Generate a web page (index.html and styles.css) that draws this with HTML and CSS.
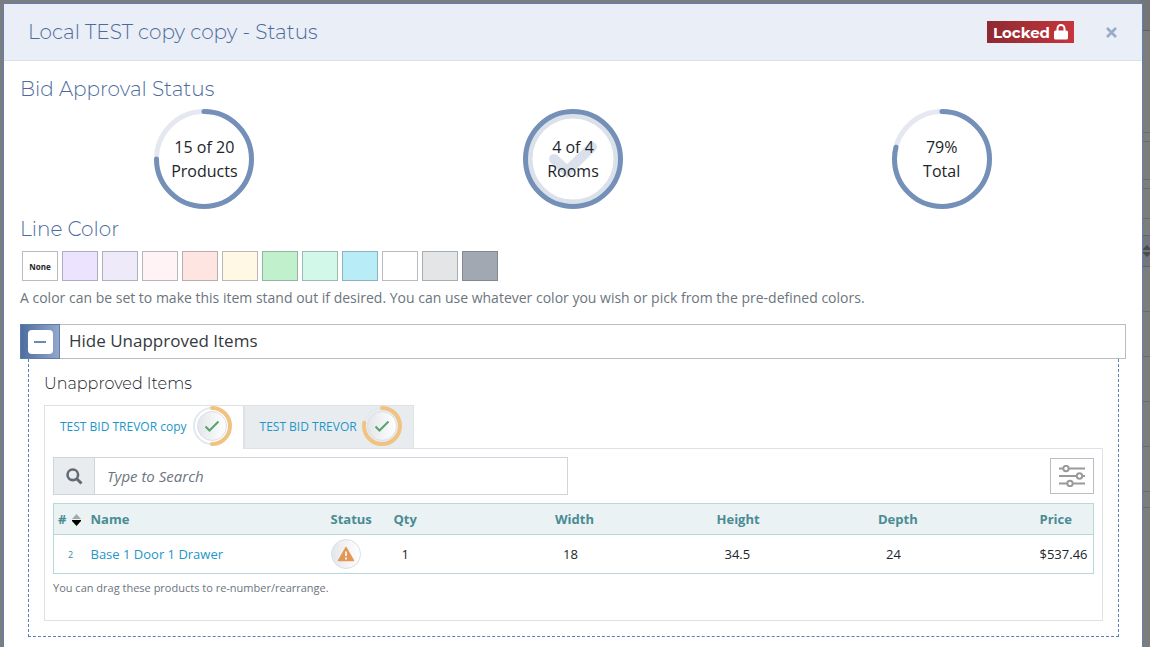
FILE: index.html
```
<!DOCTYPE html>
<html lang="en">
<head>
    <meta charset="UTF-8">
    <meta name="viewport" content="width=device-width, initial-scale=1.0">
    <title>Local TEST copy copy - Status</title>
    <link rel="stylesheet" href="styles.css">
</head>
<body>
    <!-- dimmed page behind the modal -->
    <div class="backdrop" aria-hidden="true">
        <div class="row head"></div>
        <div class="row gap"></div>
        <div class="row short"></div>
        <div class="row"></div>
        <div class="row short"></div>
        <div class="row mid"></div>
        <div class="row thin"></div>
        <div class="row sort">
            <svg width="10" height="12" viewBox="0 0 10 12"><path d="M5 0l5 5H0zM5 12L0 7h10z" fill="#4b4b4b"/></svg>
        </div>
        <div class="row tall"></div>
        <div class="row tall"></div>
        <div class="row tall"></div>
        <div class="row tall"></div>
        <div class="row tall"></div>
        <div class="row last"></div>
    </div>

    <div class="modal" role="dialog" aria-labelledby="modal-title">
        <header class="modal-header">
            <h1 id="modal-title">Local TEST copy copy - Status</h1>
            <span class="locked">Locked
                <svg width="14" height="16" viewBox="0 0 14 16"><path d="M3.500 7V4.500a3.500 3.500 0 0 1 7 0V7" fill="none" stroke="#fff" stroke-width="2"/><rect y="6.500" width="14" height="9" rx="1.500" fill="#fff"/></svg>
            </span>
            <button class="close" type="button" aria-label="Close">
                <svg width="11" height="11" viewBox="0 0 11 11"><path d="M1 1l9 9M10 1l-9 9" stroke="#98abc8" stroke-width="2.600"/></svg>
            </button>
        </header>

        <main class="modal-body">
            <h2>Bid Approval Status</h2>
            <div class="status-rings">
                <div class="ring">
                    <svg viewBox="0 0 100 100">
                        <circle class="track" cx="50" cy="50" r="47.500"/>
                        <circle class="bar" cx="50" cy="50" r="47.500" pathLength="100" stroke-dasharray="75 100"/>
                    </svg>
                    <p>15 of 20<br>Products</p>
                </div>
                <div class="ring">
                    <svg viewBox="0 0 100 100">
                        <circle cx="50" cy="50" r="43" fill="none" stroke="#dbe1eb" stroke-width="4"/>
                        <path d="M31 50l13 12 25-24" fill="none" stroke="#dbe1eb" stroke-width="10" stroke-linecap="round"/>
                        <circle class="bar" cx="50" cy="50" r="47.500"/>
                    </svg>
                    <p>4 of 4<br>Rooms</p>
                </div>
                <div class="ring">
                    <svg viewBox="0 0 100 100">
                        <circle class="track" cx="50" cy="50" r="47.500"/>
                        <circle class="bar" cx="50" cy="50" r="47.500" pathLength="100" stroke-dasharray="79 100"/>
                    </svg>
                    <p>79%<br>Total</p>
                </div>
            </div>

            <h2>Line Color</h2>
            <div class="swatches">
                <button type="button">None</button>
                <button type="button" class="violet" aria-label="Violet"></button>
                <button type="button" class="lavender" aria-label="Lavender"></button>
                <button type="button" class="blush" aria-label="Blush"></button>
                <button type="button" class="rose" aria-label="Rose"></button>
                <button type="button" class="cream" aria-label="Cream"></button>
                <button type="button" class="green" aria-label="Green"></button>
                <button type="button" class="mint" aria-label="Mint"></button>
                <button type="button" class="sky" aria-label="Sky"></button>
                <button type="button" class="white" aria-label="White"></button>
                <button type="button" class="silver" aria-label="Silver"></button>
                <button type="button" class="slate" aria-label="Slate"></button>
            </div>
            <p class="help">A color can be set to make this item stand out if desired. You can use whatever color you wish or pick from the pre-defined colors.</p>

            <button class="toggle" type="button" aria-expanded="true">
                <span class="toggle-icon"><span><svg width="12" height="2" viewBox="0 0 12 2"><path d="M0 1h12" stroke="#6c87b1" stroke-width="2"/></svg></span></span>
                <span class="toggle-label">Hide Unapproved Items</span>
            </button>

            <section class="unapproved">
                <h3>Unapproved Items</h3>
                <nav class="tabs">
                    <a href="#" class="active">TEST BID TREVOR copy
                        <svg width="40" height="40" viewBox="0 0 40 40">
                            <defs>
                                <linearGradient id="disc"><stop offset="0" stop-color="#e3e6ea"/><stop offset="1" stop-color="#fff"/></linearGradient>
                            </defs>
                            <circle cx="20" cy="20" r="18" fill="none" stroke="#e4e8f0" stroke-width="2"/>
                            <circle cx="20" cy="20" r="14.500" fill="url(#disc)" stroke="#dcdfe4"/>
                            <circle class="mini-bar" cx="20" cy="20" r="18" pathLength="100" stroke-dasharray="50 100"/>
                            <path d="M13.500 20.500l4 4 9-9" fill="none" stroke="#57a46c" stroke-width="2"/>
                        </svg>
                    </a>
                    <a href="#">TEST BID TREVOR
                        <svg width="40" height="40" viewBox="0 0 40 40">
                            <circle cx="20" cy="20" r="18" fill="none" stroke="#e4e8f0" stroke-width="2"/>
                            <circle cx="20" cy="20" r="14.500" fill="url(#disc)" stroke="#dcdfe4"/>
                            <circle class="mini-bar" cx="20" cy="20" r="18" pathLength="100" stroke-dasharray="78 100"/>
                            <path d="M13.500 20.500l4 4 9-9" fill="none" stroke="#57a46c" stroke-width="2"/>
                        </svg>
                    </a>
                </nav>

                <div class="panel">
                    <div class="toolbar">
                        <div class="search">
                            <label for="search" aria-label="Search">
                                <svg width="17" height="17" viewBox="0 0 17 17"><circle cx="6.800" cy="6.800" r="5.300" fill="none" stroke="#626b74" stroke-width="2.600"/><path d="M10.500 10.500l5 5" stroke="#626b74" stroke-width="3"/></svg>
                            </label>
                            <input id="search" type="text" placeholder="Type to Search">
                        </div>
                        <button class="filter" type="button" aria-label="Filter">
                            <svg width="26" height="22" viewBox="0 0 26 22" fill="#fff" stroke="#9a9a9a" stroke-width="2">
                                <path d="M0 3.500h26M0 11h26M0 18.500h26"/>
                                <circle cx="7" cy="3.500" r="2.700"/>
                                <circle cx="20.500" cy="11" r="2.700"/>
                                <circle cx="11" cy="18.500" r="2.700"/>
                            </svg>
                        </button>
                    </div>

                    <table>
                        <thead>
                            <tr>
                                <th class="num"># <svg width="9" height="12" viewBox="0 0 9 12"><path d="M4.500 0L9 5H0z" fill="#a3a9aa"/><path d="M4.500 12L0 7V6h9v1z"/></svg></th>
                                <th class="name">Name</th>
                                <th class="status">Status</th>
                                <th class="dim">Qty</th>
                                <th class="dim">Width</th>
                                <th class="dim">Height</th>
                                <th class="dim">Depth</th>
                                <th class="price">Price</th>
                            </tr>
                        </thead>
                        <tbody>
                            <tr>
                                <td class="num">2</td>
                                <td><a href="#">Base 1 Door 1 Drawer</a></td>
                                <td>
                                    <svg width="30" height="30" viewBox="0 0 30 30">
                                        <circle cx="15" cy="15" r="14.500" fill="url(#disc)" stroke="#dcdfe4"/>
                                        <path d="M15 8.500l7.500 13h-15z" fill="#e29755" stroke="#e29755" stroke-width="1.500" stroke-linejoin="round"/>
                                        <path d="M15 12.500v4.500M15 18.500v2" stroke="#f7efe7" stroke-width="2"/>
                                    </svg>
                                </td>
                                <td class="dim">1</td>
                                <td class="dim">18</td>
                                <td class="dim">34.5</td>
                                <td class="dim">24</td>
                                <td>$537.46</td>
                            </tr>
                        </tbody>
                    </table>
                    <p class="note">You can drag these products to re-number/rearrange.</p>
                </div>
            </section>
        </main>
    </div>
</body>
</html>
```
FILE: styles.css
```
* {
    box-sizing: border-box;
}
body {
    margin: 0;
    padding: 3px 7px 0 3px;
    background-color: #7d7d7b;
    font-family: "Open Sans", sans-serif;
    font-size: 13px;
    color: #212529;
}
h1, h2, h3, p {
    margin: 0;
}
h1, h2, h3 {
    font-family: Montserrat, Inter, sans-serif;
    font-weight: 300;
}
button {
    padding: 0;
    font-family: inherit;
    cursor: pointer;
}
svg {
    flex: none;
}
a {
    color: #2196c8;
    text-decoration: none;
}

/* page behind */
.backdrop {
    position: fixed;
    inset: 0 0 0 auto;
    width: 10px;
    overflow: hidden;
}
.row {
    height: 38px;
    border-bottom: 1px solid #6c6c6c;
}
.row.head {
    height: 31px;
    background-color: #757575;
    border-color: #5f5f5f;
}
.row.gap {
    height: 102px;
}
.row.short {
    height: 9px;
}
.row.mid {
    height: 30px;
}
.row.thin {
    height: 17px;
    border-color: #5f6272;
}
.row.sort {
    display: flex;
    align-items: center;
    justify-content: flex-end;
    height: 31px;
    margin-right: -2px;
    background-color: #74767d;
    border-color: #5f6272;
}
.row.tall {
    height: 45px;
}
.row.last {
    height: 16px;
}

/* modal */
.modal {
    position: relative;
    min-height: calc(100vh - 3px);
    background-color: #fff;
    border: 1px solid #5b7fb9;
    border-bottom: 0;
}
.modal-header {
    display: flex;
    align-items: center;
    height: 57px;
    padding: 0 25px 0 24px;
    background-color: #eaeef6;
    border-bottom: 1px solid #dcdfe6;
}
.modal-header h1 {
    flex: 1;
    font-size: 20px;
    line-height: 24px;
    color: #4c6b9c;
}
.locked {
    display: flex;
    align-items: center;
    gap: 4px;
    height: 22px;
    padding: 0 6px;
    background: linear-gradient(90deg, #8e2a30, #c6353d);
    color: #fff;
    font-family: Montserrat, Inter, sans-serif;
    font-size: 15px;
    font-weight: 700;
}
.close {
    display: flex;
    margin-left: 32px;
    border: 0;
    background: none;
}
.modal-body {
    padding: 16px 16px 10px;
}
h2 {
    font-size: 20px;
    line-height: 24px;
    color: #4c6b9c;
}

/* progress rings */
.status-rings {
    display: grid;
    grid-template-columns: repeat(3, 1fr);
    justify-items: center;
    margin: 8px 0;
}
.ring {
    display: grid;
    width: 100px;
    height: 100px;
}
.ring svg, .ring p {
    grid-area: 1 / 1;
}
.ring p {
    align-self: center;
    font-size: 16px;
    line-height: 24px;
    text-align: center;
}
.ring circle {
    stroke-width: 5;
    transform: rotate(-90deg);
    transform-origin: center;
}
.track {
    fill: none;
    stroke: #e5e8f0;
}
.bar {
    fill: none;
    stroke: #7490b8;
    stroke-linecap: round;
}

/* line color */
.swatches {
    display: flex;
    gap: 4px;
    margin: 10px 2px 7px;
}
.swatches button {
    width: 36px;
    height: 30px;
    border: 1px solid rgba(80, 90, 100, 0.4);
    background-color: #fff;
    color: #212529;
    font-size: 8px;
    font-weight: 700;
}
.swatches .violet { background-color: #ece4ff; }
.swatches .lavender { background-color: #eeeaf9; }
.swatches .blush { background-color: #fff3f5; }
.swatches .rose { background-color: #ffe5e2; }
.swatches .cream { background-color: #fff8e5; }
.swatches .green { background-color: #c0f0cc; }
.swatches .mint { background-color: #d2f8ea; }
.swatches .sky { background-color: #b8edf8; }
.swatches .silver { background-color: #e3e5e7; }
.swatches .slate { background-color: #a1a8b2; }
.help {
    line-height: 20px;
    font-size: 14px;
    color: #6c757d;
}

/* unapproved items */
.toggle {
    display: flex;
    width: 100%;
    height: 35px;
    margin-top: 16px;
    border: 1px solid #b8bfc3;
    background-color: #fff;
    color: #343a40;
    font-size: 17px;
    line-height: 24px;
}
.toggle-icon {
    display: flex;
    align-items: center;
    justify-content: center;
    width: 40px;
    margin: -1px 0 -1px -1px;
    border: 1px solid #5b7dab;
    background: linear-gradient(90deg, #4d6e9f, #93a7cb);
}
.toggle-icon span {
    display: flex;
    align-items: center;
    justify-content: center;
    width: 25px;
    height: 24px;
    border-radius: 4px;
    background-color: #fff;
}
.toggle-label {
    padding: 4px 0 0 9px;
}
.unapproved {
    margin: 0 7px 0 8px;
    padding: 13px 15px 15px;
    border: 1px dashed #5b7fb9;
    border-top: 0;
}
h3 {
    font-size: 16px;
    line-height: 24px;
    color: #212529;
}
.tabs {
    display: flex;
    margin-top: 9px;
}
.tabs a {
    display: flex;
    align-items: center;
    gap: 5px;
    height: 43px;
    padding: 0 11px 2px 15px;
    border: 1px solid #dee2e6;
    border-bottom: 0;
    background-color: #e9ecef;
    font-size: 12px;
}
.tabs .active {
    margin-bottom: -1px;
    height: 44px;
    padding-bottom: 3px;
    z-index: 1;
    background-color: #fff;
}
.mini-bar {
    fill: none;
    stroke: #f0c383;
    stroke-width: 4;
    stroke-linecap: round;
    transform: rotate(-90deg);
    transform-origin: center;
}
.panel {
    padding: 8px 8px 23px;
    border: 1px solid #dee2e6;
}
.toolbar {
    display: flex;
    align-items: center;
    justify-content: space-between;
    margin-bottom: 8px;
}
.search {
    display: flex;
    width: 515px;
    height: 38px;
    border: 1px solid #ced4da;
}
.search label {
    display: flex;
    align-items: center;
    justify-content: center;
    width: 41px;
    border-right: 1px solid #ced4da;
    background-color: #e9ecef;
}
.search input {
    flex: 1;
    padding: 0 12px;
    border: 0;
    font-family: inherit;
    font-size: 15px;
}
.search input::placeholder {
    color: #6c757d;
    font-style: italic;
}
.filter {
    display: flex;
    align-items: center;
    justify-content: center;
    width: 44px;
    height: 36px;
    border: 1px solid #b8bfc3;
    background-color: #fff;
}
table {
    width: 100%;
    table-layout: fixed;
    border: 1px solid #b9d8da;
    border-collapse: collapse;
}
th, td {
    padding: 0 4px;
    text-align: left;
    border-bottom: 1px solid #b9d8da;
}
th {
    height: 31px;
    background-color: #eaf2f3;
    color: #4b8b94;
}
td {
    height: 39px;
}
td svg {
    display: block;
}
th.num {
    width: 33px;
    padding-right: 0;
    white-space: nowrap;
}
th.num svg {
    margin-left: 2px;
    vertical-align: -2px;
}
td.num {
    padding-left: 14px;
    color: #2e8fa5;
    font-size: 9px;
}
th.name {
    width: 240px;
}
th.status {
    width: 63px;
}
th.price {
    width: 58px;
}
td.dim {
    padding-left: 12px;
}
.note {
    margin-top: 5px;
    font-size: 11px;
    line-height: 18px;
    color: #6c757d;
}
```
